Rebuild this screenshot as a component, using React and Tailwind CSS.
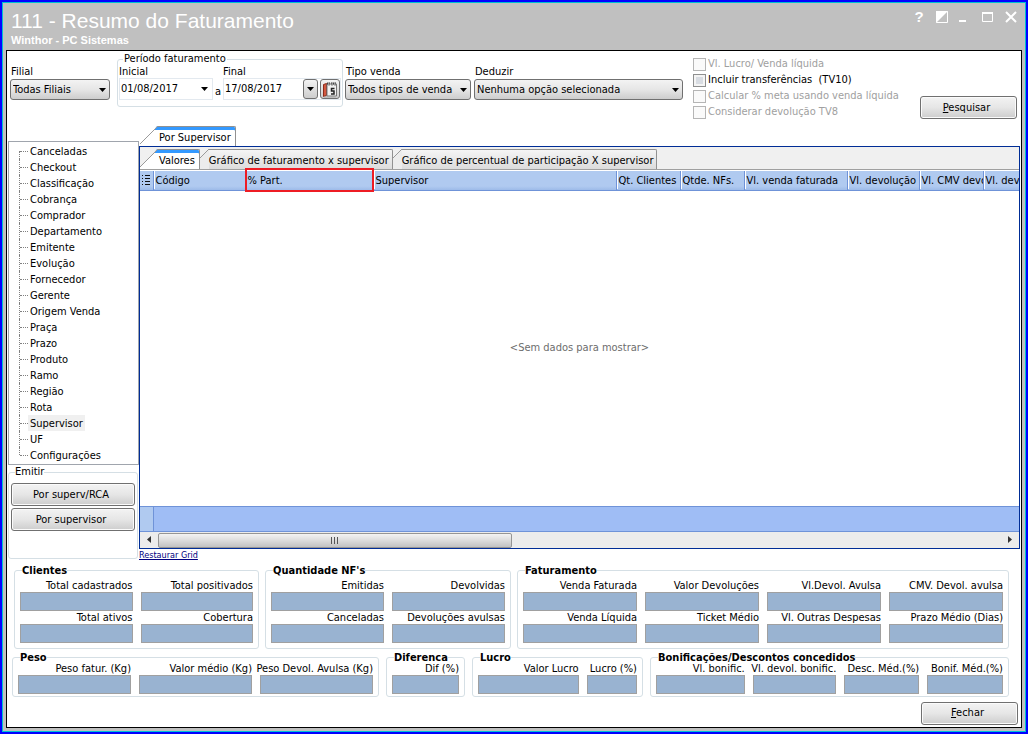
// App.jsx
const TREE = [
  'Canceladas', 'Checkout', 'Classificação', 'Cobrança', 'Comprador', 'Departamento', 'Emitente',
  'Evolução', 'Fornecedor', 'Gerente', 'Origem Venda', 'Praça', 'Prazo', 'Produto', 'Ramo',
  'Região', 'Rota', 'Supervisor', 'UF', 'Configurações',
]

const COLUMNS = [
  { label: 'Código', width: 'w-[92px]' },
  { label: '% Part.', width: 'w-[128px]', marked: true },
  { label: 'Supervisor', width: '' },
  { label: 'Qt. Clientes', width: 'w-[64px]' },
  { label: 'Qtde. NFs.', width: 'w-[64px]' },
  { label: 'Vl. venda faturada', width: 'w-[103px]' },
  { label: 'Vl. devolução', width: 'w-[72px]' },
  { label: 'Vl. CMV devo', width: 'w-[64px]' },
  { label: 'Vl. dev', width: 'w-[36px]' },
]

const BUTTON =
  'h-[23px] rounded-[3px] border border-[#707070] bg-linear-to-b from-[#f3f3f3] via-[#e6e6e6] to-[#cdcdcd] shadow-[inset_0_0_0_1px_#fbfbfb]'

function Caret() {
  return (
    <svg width="7" height="4" viewBox="0 0 7 4" className="shrink-0" aria-hidden="true">
      <path d="M0 0h7L3.5 4z" fill="#000" />
    </svg>
  )
}

function Select({ id, label, value, width }) {
  return (
    <div className={`pt-[13px] ${width}`}>
      <label htmlFor={id} className="block leading-[14px] pl-px">{label}</label>
      <div className="relative">
        <select
          id={id}
          className="block w-full h-[21px] appearance-none rounded-[3px] border border-[#707070] bg-linear-to-b from-[#f3f3f3] via-[#e6e6e6] to-[#cdcdcd] pl-[2px]"
        >
          <option>{value}</option>
        </select>
        <span className="pointer-events-none absolute right-[4px] top-[9px]">
          <Caret />
        </span>
      </div>
    </div>
  )
}

function Check({ label, disabled }) {
  return (
    <label className={`flex h-4 items-center gap-[2px] ${disabled ? 'text-[#a0a0a0]' : ''}`}>
      <input
        type="checkbox"
        disabled={disabled}
        className={`h-[13px] w-[13px] appearance-none border ${
          disabled ? 'border-[#b5b5b5] bg-[#fafafa]' : 'border-[#8e8f8f] bg-[#d8dce2] shadow-[inset_0_0_0_2px_#f4f4f4]'
        }`}
      />
      <span className="whitespace-pre">{label}</span>
    </label>
  )
}

function CalendarIcon() {
  return (
    <svg width="17" height="17" viewBox="0 0 17 17" aria-hidden="true">
      <path d="M1.500 3.500l3-1v12l-3 1z" fill="#d2573f" stroke="#8c2a1a" />
      <path d="M5 3h9.500v12H5z" fill="#f1f1f1" stroke="#777" />
      <path d="M5 2.500h10" stroke="#444" strokeWidth="2" strokeDasharray="1 1" />
      <path d="M7 1v4M10 1v4M13 1v4" stroke="#888" />
      <path d="M12.500 7.500h-3v2.500h2.500v3h-3" fill="none" stroke="#222" strokeWidth="1.500" />
      <path d="M2 16h12" stroke="#aaa" />
    </svg>
  )
}

function Toolbar() {
  return (
    <div className="flex min-h-[75px] items-start pl-[3px] pr-1 pt-px">
      <Select id="filial" label="Filial" value="Todas Filiais" width="w-[100px] shrink-0 mr-[7px]" />
      <fieldset className="mr-[2px] min-w-0 shrink-0 rounded-[3px] border border-[#d5dfe5] px-px pb-[6px]">
        <legend className="ml-1 px-px leading-[14px]">Período faturamento</legend>
        <div className="flex items-end">
          <div className="w-[94px]">
            <label htmlFor="inicial" className="block leading-[12px]">Inicial</label>
            <div className="flex h-[22px] items-center border border-[#e3e9ef] pr-1">
              <input id="inicial" defaultValue="01/08/2017" className="w-full min-w-0 pl-px pb-px outline-none" />
              <button aria-label="Abrir data inicial"><Caret /></button>
            </div>
          </div>
          <span className="w-[10px] pb-px text-center">a</span>
          <div className="w-[118px]">
            <label htmlFor="final" className="block leading-[12px]">Final</label>
            <div className="flex h-[22px] items-center gap-[2px] border border-[#e3e9ef]">
              <input id="final" defaultValue="17/08/2017" className="w-full min-w-0 pl-px pb-px outline-none" />
              <button aria-label="Abrir data final" className="flex h-5 w-[15px] shrink-0 items-center justify-center rounded-[3px] border border-[#707070] bg-linear-to-b from-[#f3f3f3] to-[#cdcdcd]">
                <Caret />
              </button>
              <button aria-label="Calendário" className="flex h-5 w-5 shrink-0 items-center justify-center rounded-[3px] border border-[#707070] bg-linear-to-b from-[#f3f3f3] to-[#cdcdcd]">
                <CalendarIcon />
              </button>
            </div>
          </div>
        </div>
      </fieldset>
      <Select id="tipo" label="Tipo venda" value="Todos tipos de venda" width="w-[126px] shrink-0 mr-[3px]" />
      <Select id="deduzir" label="Deduzir" value="Nenhuma opção selecionada" width="w-[209px] shrink-0 mr-[10px]" />
      <div className="pt-1">
        <Check label="Vl. Lucro/ Venda líquida" disabled />
        <Check label="Incluir transferências  (TV10)" />
        <Check label="Calcular % meta usando venda líquida" disabled />
        <Check label="Considerar devolução TV8" disabled />
      </div>
      <div className="ml-auto pt-11">
        <button className={`${BUTTON} w-[97px] pr-1`}><u>P</u>esquisar</button>
      </div>
    </div>
  )
}

function Sidebar() {
  return (
    <aside className="ml-px w-[131px] shrink-0 pt-[15px]">
      <ul className="border border-[#a0a5ad] py-px">
        {TREE.map((item, i) => (
          <li key={item} className="flex h-4 pl-[10px]">
            <span className={`w-px border-l border-dotted border-[#808080] ${i === TREE.length - 1 ? 'h-2' : ''} ${i === 0 ? 'mt-2' : ''}`} />
            <span className="mt-2 w-2 border-t border-dotted border-[#808080]" />
            <a href="#" className={`px-[2px] pt-[2px] leading-[14px] ${item === 'Supervisor' ? 'bg-[#f0f0f0]' : ''}`}>{item}</a>
          </li>
        ))}
      </ul>
      <fieldset className="mr-px min-w-0 rounded-[3px] border border-[#d5dfe5] px-[2px] pb-[27px]">
        <legend className="ml-1 leading-[14px]">Emitir</legend>
        <div className="flex flex-col gap-[2px] pt-1">
          <button className={`${BUTTON} w-full pr-1`}>Por superv/RCA</button>
          <button className={`${BUTTON} w-full pr-1`}>Por supervisor</button>
        </div>
      </fieldset>
    </aside>
  )
}

function Tab({ label, active, slant = 18 }) {
  return (
    <button className="flex h-5 items-stretch">
      <svg width={slant} height="20" viewBox={`0 0 ${slant} 20`} className="shrink-0" aria-hidden="true">
        <path d={`M0 ${slant}L${slant} .5V20H0z`} fill={active ? '#fff' : '#ececec'} />
        {active && <path d={`M${slant - 4} 4L${slant - 1} 0H${slant}V4z`} fill="#3399ff" />}
        <path d={`M0 ${slant}L${slant} 0`} stroke="#9a9a9a" fill="none" />
      </svg>
      <span
        className={`flex items-center whitespace-nowrap rounded-tr-[2px] border-r border-t border-[#919191] pt-[3px] ${
          active ? 'bg-white pl-px pr-1 shadow-[inset_0_3px_0_#3399ff]' : 'bg-linear-to-b from-[#f5f5f5] to-[#dcdcdc] pr-[3px]'
        }`}
      >
        {label}
      </span>
    </button>
  )
}

function DataGrid() {
  return (
    <table className="w-full table-fixed border-collapse">
      <thead>
        <tr className="h-[19px] bg-linear-to-b from-[#b0caf0] from-80% to-[#9dbbe9]">
          <th className="w-[13px] border-b border-r border-[#6f93d8] p-0">
            <svg width="9" height="11" viewBox="0 0 9 11" className="ml-[2px]" aria-hidden="true">
              <path d="M0 .5h1M0 3.500h1M0 6.500h1M0 9.500h1M3 .5h5M3 3.500h5M3 6.500h5M3 9.500h5" stroke="#111" />
            </svg>
          </th>
          {COLUMNS.map((col) => (
            <th key={col.label} className={`relative border-b border-r border-[#6f93d8] p-0 text-left font-normal last:border-r-0 ${col.width}`}>
              <div className="overflow-hidden whitespace-nowrap border-l border-white pl-px pt-[2px] leading-[16px]">{col.label}</div>
              {col.marked && <span className="absolute -inset-x-px -bottom-[2px] -top-[3px] z-10 border-2 border-[#ee1c24]" />}
            </th>
          ))}
        </tr>
      </thead>
      <tbody>
        <tr>
          <td colSpan={10} className="h-[316px] text-center text-[#6d6d6d]">&lt;Sem dados para mostrar&gt;</td>
        </tr>
      </tbody>
      <tfoot>
        <tr className="h-[25px]">
          <td className="border border-l-0 border-[#6f93d8] bg-[#b0caf0]" />
          <td colSpan={9} className="border border-r-0 border-[#6f93d8] bg-[#9fbdf5]" />
        </tr>
      </tfoot>
    </table>
  )
}

function ScrollBar() {
  return (
    <div className="flex h-4 bg-[#ececec]">
      <button aria-label="Rolar para a esquerda" className="flex w-[18px] items-center justify-center">
        <svg width="4" height="7" viewBox="0 0 4 7"><path d="M4 0v7L0 3.500z" fill="#333" /></svg>
      </button>
      <div className="flex-1">
        <div className="mt-px flex h-[15px] w-[42%] items-center justify-center rounded-[2px] border border-[#959595] bg-linear-to-b from-[#f3f3f3] via-[#dcdcdc] to-[#c2c2c2]">
          <svg width="8" height="7" viewBox="0 0 8 7" aria-hidden="true"><path d="M.5 0v7M3.500 0v7M6.500 0v7" stroke="#555" /></svg>
        </div>
      </div>
      <button aria-label="Rolar para a direita" className="flex w-[18px] items-center justify-center">
        <svg width="4" height="7" viewBox="0 0 4 7"><path d="M0 0v7l4-3.500z" fill="#333" /></svg>
      </button>
    </div>
  )
}

function Field({ label }) {
  return (
    <label className="block min-w-0">
      <span className="flex h-[13px] justify-end whitespace-nowrap leading-[14px]">{label}</span>
      <input readOnly className="block h-[19px] w-full border border-[#a0a0a0] bg-[#99b3d1]" />
    </label>
  )
}

function Group({ title, cols, fields, tall }) {
  return (
    <fieldset className={`min-w-0 rounded-[3px] border border-[#d5dfe5] px-[5px] ${tall ? 'pb-[5px] pt-1' : 'pb-[2px]'}`}>
      <legend className="ml-[2px] h-[9px] whitespace-nowrap font-bold leading-[10px]">{title}</legend>
      <div className={`grid gap-x-2 ${cols}`}>
        {fields.map((f) => <Field key={f} label={f} />)}
      </div>
    </fieldset>
  )
}

function Totals() {
  return (
    <div className="flex flex-col gap-1 pl-[5px] pr-3">
      <div className="ml-[2px] grid grid-cols-[245fr_246fr_492fr] gap-[6px]">
        <Group tall title="Clientes" cols="grid-cols-2" fields={['Total cadastrados', 'Total positivados', 'Total ativos', 'Cobertura']} />
        <Group tall title="Quantidade NF's" cols="grid-cols-2" fields={['Emitidas', 'Devolvidas', 'Canceladas', 'Devoluções avulsas']} />
        <Group
          tall
          title="Faturamento"
          cols="grid-cols-4"
          fields={[
            'Venda Faturada', 'Valor Devoluções', 'Vl.Devol. Avulsa', 'CMV. Devol. avulsa',
            'Venda Líquida', 'Ticket Médio', 'Vl. Outras Despesas', 'Prazo Médio (Dias)',
          ]}
        />
      </div>
      <div className="grid grid-cols-[367fr_79fr_171fr_359fr] gap-[7px]">
        <Group title="Peso" cols="grid-cols-3" fields={['Peso fatur. (Kg)', 'Valor médio (Kg)', 'Peso Devol. Avulsa (Kg)']} />
        <Group title="Diferenca" cols="grid-cols-1" fields={['Dif (%)']} />
        <Group title="Lucro" cols="grid-cols-[2fr_1fr]" fields={['Valor Lucro', 'Lucro (%)']} />
        <Group
          title="Bonificações/Descontos concedidos"
          cols="grid-cols-[89fr_84fr_75fr_76fr]"
          fields={['Vl. bonific.', 'Vl. devol. bonific.', 'Desc. Méd.(%)', 'Bonif. Méd.(%)']}
        />
      </div>
    </div>
  )
}

function TitleBar() {
  return (
    <header className="flex h-[47px] items-start justify-between px-[5px] text-white font-['Liberation_Sans',sans-serif]">
      <div className="pt-[6px]">
        <h1 className="text-[21px] leading-6">111 - Resumo do Faturamento</h1>
        <p className="text-[11px] font-bold leading-[14px]">Winthor - PC Sistemas</p>
      </div>
      <div className="flex items-center gap-[11px] pt-[7px]">
        <button aria-label="Ajuda" className="w-3 text-[15px] font-bold leading-[14px]">?</button>
        <button aria-label="Recolher">
          <svg width="12" height="12" viewBox="0 0 12 12"><path d="M.5 .5h11v11H.5z" fill="none" stroke="#fff" /><path d="M0 0h12L0 12z" fill="#fff" /></svg>
        </button>
        <button aria-label="Minimizar">
          <svg width="12" height="12" viewBox="0 0 12 12"><path d="M0 10h7" stroke="#fff" strokeWidth="2" /></svg>
        </button>
        <button aria-label="Maximizar">
          <svg width="12" height="12" viewBox="0 0 12 12"><path d="M.5 1.500h10v9H.5z" fill="none" stroke="#fff" /><path d="M0 2h11" stroke="#fff" strokeWidth="2" /></svg>
        </button>
        <button aria-label="Fechar janela">
          <svg width="12" height="12" viewBox="0 0 12 12"><path d="M1 1l10 10M11 1L1 11" stroke="#fff" strokeWidth="2" /></svg>
        </button>
      </div>
    </header>
  )
}

export default function App() {
  return (
    <div className="flex min-h-screen border-2 border-[#0000ff] text-[11px] leading-[14px] text-black font-['DejaVu_Sans_Condensed','DejaVu_Sans',sans-serif]">
      <div className="flex min-w-0 flex-1 flex-col border border-[#00c0d0] bg-[#c0c0c0] px-[3px] pb-[3px]">
        <TitleBar />
        <main className="flex flex-1 flex-col border border-black bg-white">
          <Toolbar />
          <div className="flex pb-1">
            <Sidebar />
            <section className="mr-px min-w-0 flex-1">
              <div className="flex h-5 pl-px">
                <Tab label="Por Supervisor" active />
              </div>
              <div className="border border-[#002d96]">
                <div className="flex items-end border-b border-[#a0a0a0] bg-[#f0f0f0] pt-[2px]">
                  <Tab label="Valores" active />
                  <Tab label="Gráfico de faturamento x supervisor" slant={9} />
                  <Tab label="Gráfico de percentual de participação X supervisor" slant={9} />
                </div>
                <div className="pt-px">
                  <DataGrid />
                  <ScrollBar />
                </div>
              </div>
              <a href="#" className="block w-fit text-[9px] leading-[13px] text-[#000080] underline">Restaurar Grid</a>
            </section>
          </div>
          <Totals />
          <div className="mt-[5px] flex justify-end pr-[3px]">
            <button className={`${BUTTON} w-[97px] pr-1`}><u>F</u>echar</button>
          </div>
        </main>
      </div>
    </div>
  )
}
